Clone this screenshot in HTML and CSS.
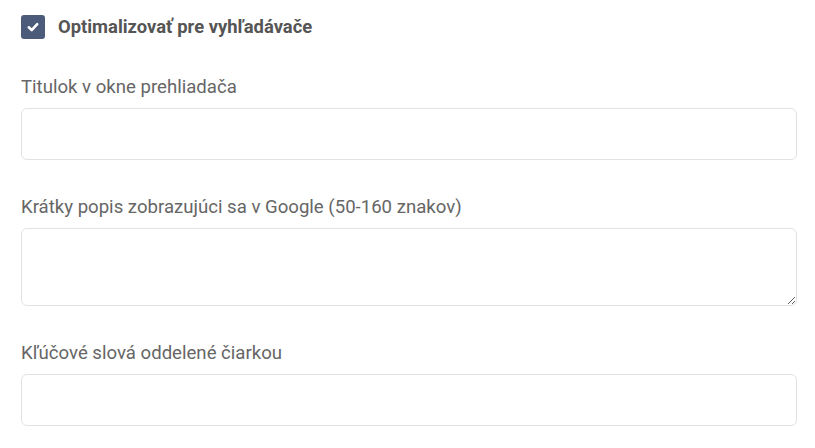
FILE: index.html
```html
<!DOCTYPE html>
<html lang="sk">
<head>
<meta charset="utf-8">
<title>SEO</title>
<link rel="stylesheet" href="styles.css">
</head>
<body>
<form class="seo-form">
  <label class="check-row">
    <span class="check-box">
      <svg width="14" height="14" viewBox="0 0 14 14" aria-hidden="true"><polyline points="2.8,7.3 5.7,10.1 11.2,4.2" fill="none" stroke="#fff" stroke-width="2.6" stroke-linecap="round" stroke-linejoin="round"/></svg>
    </span>
    <span class="check-label">Optimalizovať pre vyhľadávače</span>
  </label>

  <div class="field">
    <label class="field-label" for="t1">Titulok v okne prehliadača</label>
    <input class="field-input" id="t1" type="text">
  </div>

  <div class="field">
    <label class="field-label" for="t2">Krátky popis zobrazujúci sa v Google (50-160 znakov)</label>
    <textarea class="field-input field-area" id="t2"></textarea>
  </div>

  <div class="field">
    <label class="field-label" for="t3">Kľúčové slová oddelené čiarkou</label>
    <input class="field-input" id="t3" type="text">
  </div>
</form>
</body>
</html>
```

FILE: styles.css
```css
html, body {
  margin: 0;
  padding: 0;
  background: #fff;
}

body {
  font-family: Roboto, "Liberation Sans", sans-serif;
  color: #666;
}

.seo-form {
  padding: 15px 18px 0 21px;
}

.check-row {
  display: flex;
  align-items: center;
  height: 24px;
  margin-bottom: 36px;
  cursor: pointer;
}

.check-box {
  width: 24px;
  height: 24px;
  border-radius: 3px;
  background: #4b5b79;
  display: flex;
  align-items: center;
  justify-content: center;
  flex: none;
}

.check-box svg {
  display: block;
}

.check-label {
  margin-left: 13px;
  font-size: 18.4px;
  font-weight: 700;
  line-height: 24px;
  color: #555;
}

.field {
  margin-bottom: 35px;
}

.field-label {
  display: block;
  font-size: 18.6px;
  line-height: 24px;
  color: #666;
  margin-bottom: 9px;
}

.field-input {
  display: block;
  box-sizing: border-box;
  width: 100%;
  height: 52px;
  margin: 0;
  padding: 8px 12px;
  border: 1px solid #e2e2e2;
  border-radius: 6px;
  background: #fff;
  font-family: inherit;
  font-size: 16px;
  color: #555;
  outline: none;
}

.field-area {
  height: 78px;
  resize: vertical;
}
```
